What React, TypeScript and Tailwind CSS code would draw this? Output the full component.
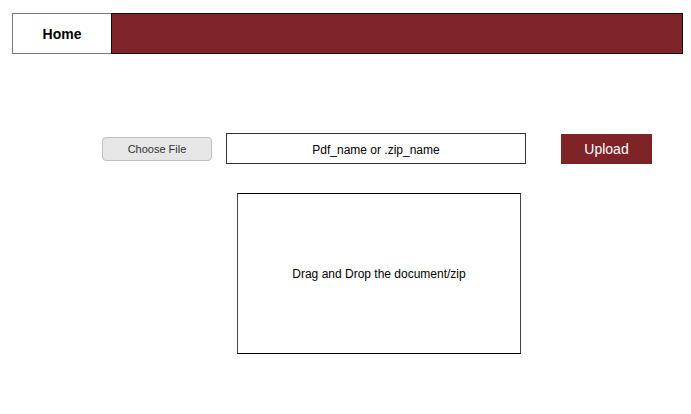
export default function App() {
  return (
    <div className="w-[691px] h-[414px] bg-white" style={{ fontFamily: '"Liberation Sans", Arial, sans-serif' }}>
      <div className="pt-[13px] pl-[12px] pr-[8px]">
        <div className="flex h-[41px]">
          <div className="w-[99px] border border-[#7a7a7a] border-r-0 flex items-center justify-center pt-[2px] text-[14px] font-bold text-black">Home</div>
          <div className="flex-1 bg-[#7f2428] border border-[#1a0a0a]"></div>
        </div>
      </div>
      <div className="flex items-center mt-[79px] pl-[102px]">
        <div className="w-[110px] h-[24px] rounded-[4px] bg-[#e6e6e6] border border-[#c0c0c0] flex items-center justify-center pt-[2px] text-[11px] text-[#333]">Choose File</div>
        <div className="ml-[14px] w-[300px] h-[31px] border border-[#333] flex items-center justify-center pt-[2px] text-[12px] text-black">Pdf_name or .zip_name</div>
        <div className="ml-[35px] w-[91px] h-[30px] bg-[#7f2327] flex items-center justify-center pt-[2px] text-[14px] text-white">Upload</div>
      </div>
      <div className="mt-[29px] ml-[237px] w-[284px] h-[161px] border border-[#444] border-t-black border-b-black flex items-center justify-center text-[12px] text-black">
        Drag and Drop the document/zip
      </div>
    </div>
  );
}
